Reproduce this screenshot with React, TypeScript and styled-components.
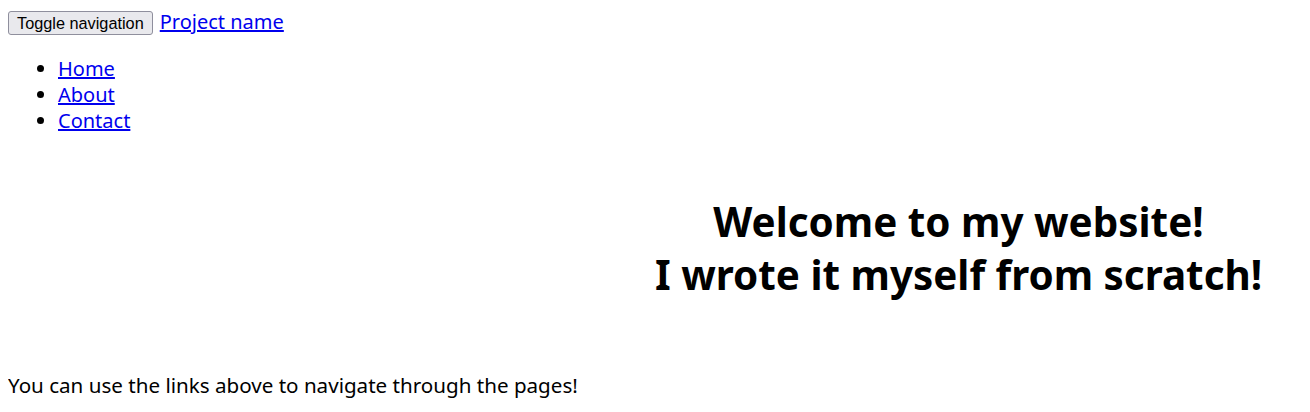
import React from "react";
import styled, { createGlobalStyle } from "styled-components";

const Global = createGlobalStyle`
  html, body { margin: 0; padding: 0; background: #fff; }
  body {
    margin: 8px;
    font-family: "Noto Sans", "Open Sans", sans-serif;
    font-size: 20px;
    line-height: 26px;
    color: #000;
  }
`;

const NavBar = styled.nav`
  display: flex;
  align-items: center;
  gap: 7px;
  height: 28px;
`;

const ToggleButton = styled.button`
  font-family: "Liberation Sans", Arial, sans-serif;
  font-size: 16.3px;
  color: #000;
  background: #e9e9ed;
  border: 1px solid #8f8f9d;
  border-radius: 3px;
  padding: 0 8px;
  height: 24px;
  margin-top: 2px;
`;

const Link = styled.a`
  color: #0000ee;
  text-decoration: underline;
`;

const NavList = styled.ul`
  margin: 20px 0;
  padding-left: 50px;
  list-style: disc;
`;

const Hero = styled.section`
  display: flex;
  justify-content: flex-end;
  padding: 41px 0 0;
`;

const Heading = styled.h1`
  margin: 0;
  width: 647px;
  padding-right: 40px;
  box-sizing: border-box;
  text-align: center;
  white-space: nowrap;
  font-size: 40.4px;
  line-height: 53px;
  font-weight: 700;
`;

const Text = styled.p`
  margin: 71px 0 8px;
  font-size: 20.6px;
`;

export default function App() {
  return (
    <>
      <Global />
      <NavBar>
        <ToggleButton type="button">Toggle navigation</ToggleButton>
        <Link href="#">Project name</Link>
      </NavBar>
      <NavList>
        <li><Link href="#">Home</Link></li>
        <li><Link href="#">About</Link></li>
        <li><Link href="#">Contact</Link></li>
      </NavList>
      <Hero>
        <Heading>
          Welcome to my website!
          <br />
          I wrote it myself from scratch!
        </Heading>
      </Hero>
      <Text>You can use the links above to navigate through the pages!</Text>
    </>
  );
}
